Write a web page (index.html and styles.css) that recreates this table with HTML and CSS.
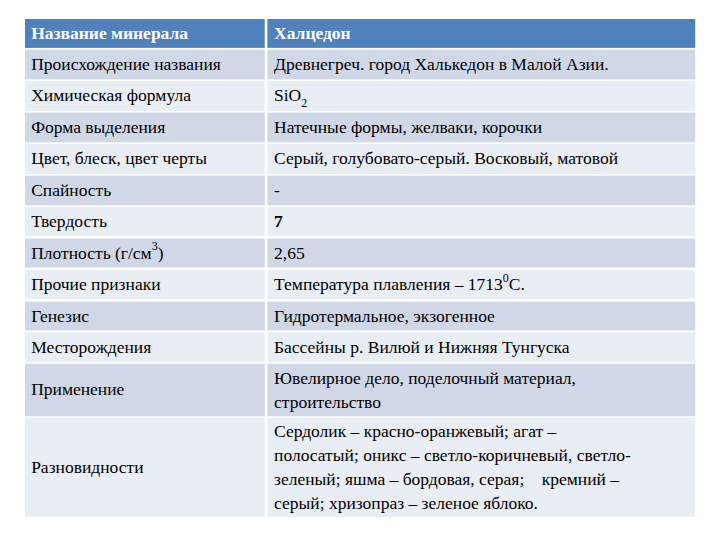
FILE: index.html
```html
<!DOCTYPE html>
<html>
<head>
<meta charset="utf-8">
<title>Mineral</title>
<link rel="stylesheet" href="styles.css">
</head>
<body>
<div class="sheet">
<div class="mineral">
  <div class="cell head"><p class="txt">Название минерала</p></div>
  <div class="cell head"><p class="txt">Халцедон</p></div>

  <div class="cell dark"><p class="txt">Происхождение названия</p></div>
  <div class="cell dark"><p class="txt">Древнегреч. город Халькедон в Малой Азии.</p></div>

  <div class="cell light"><p class="txt">Химическая формула</p></div>
  <div class="cell light"><p class="txt">SiO<sub>2</sub></p></div>

  <div class="cell dark"><p class="txt">Форма выделения</p></div>
  <div class="cell dark"><p class="txt">Натечные формы, желваки, корочки</p></div>

  <div class="cell light"><p class="txt">Цвет, блеск, цвет черты</p></div>
  <div class="cell light"><p class="txt">Серый, голубовато-серый. Восковый, матовой</p></div>

  <div class="cell dark"><p class="txt">Спайность</p></div>
  <div class="cell dark"><p class="txt">-</p></div>

  <div class="cell light"><p class="txt">Твердость</p></div>
  <div class="cell light"><p class="txt bold">7</p></div>

  <div class="cell dark"><p class="txt">Плотность (г/см<sup>3</sup>)</p></div>
  <div class="cell dark"><p class="txt">2,65</p></div>

  <div class="cell light"><p class="txt">Прочие признаки</p></div>
  <div class="cell light"><p class="txt">Температура плавления – 1713<sup>0</sup>С.</p></div>

  <div class="cell dark"><p class="txt">Генезис</p></div>
  <div class="cell dark"><p class="txt">Гидротермальное, экзогенное</p></div>

  <div class="cell light"><p class="txt">Месторождения</p></div>
  <div class="cell light"><p class="txt">Бассейны р. Вилюй и Нижняя Тунгуска</p></div>

  <div class="cell dark"><p class="txt">Применение</p></div>
  <div class="cell dark"><p class="txt">Ювелирное дело, поделочный материал,<br>строительство</p></div>

  <div class="cell light"><p class="txt">Разновидности</p></div>
  <div class="cell light"><p class="txt nowrap">Сердолик – красно-оранжевый; агат –<br>полосатый; оникс – светло-коричневый, светло-<br>зеленый; яшма – бордовая, серая; &nbsp;&nbsp;&nbsp;кремний –<br>серый; хризопраз – зеленое яблоко.</p></div>
</div>
</div>
</body>
</html>
```
FILE: styles.css
```css
html {
  overflow: hidden;
}

html, body {
  margin: 0;
  padding: 0;
  background: #ffffff;
}

body {
  color: #000000;
}

.sheet {
  padding: 19px 0 0 25px;
  width: 670px;
  height: 500px;
}

.mineral {
  display: grid;
  width: 765.7px;
  grid-template-columns: 274.3px 489.1px;
  grid-template-rows: 33.1px repeat(10, 33.6px) 59.4px 113.1px;
  column-gap: 2.3px;
  row-gap: 2.3px;
  transform: scale(0.875);
  transform-origin: 0 0;
}

.cell {
  display: flex;
  align-items: center;
  padding: 0 7px 0 8px;
}

.cell:nth-child(odd) {
  padding-left: 7px;
}

.txt {
  margin: 0;
  font-family: "Liberation Serif";
  font-size: 20px;
  line-height: 27.4px;
}

.head {
  background: #4f81bd;
  color: #ffffff;
}

.head .txt {
  font-weight: bold;
}

.dark {
  background: #d0d8e8;
}

.light {
  background: #e9edf4;
}

.bold {
  font-weight: bold;
}

.nowrap {
  white-space: nowrap;
}

sub, sup {
  font-size: 13.7px;
  line-height: 0;
}

sub {
  vertical-align: -6.5px;
}

sup {
  vertical-align: 10px;
}
```
